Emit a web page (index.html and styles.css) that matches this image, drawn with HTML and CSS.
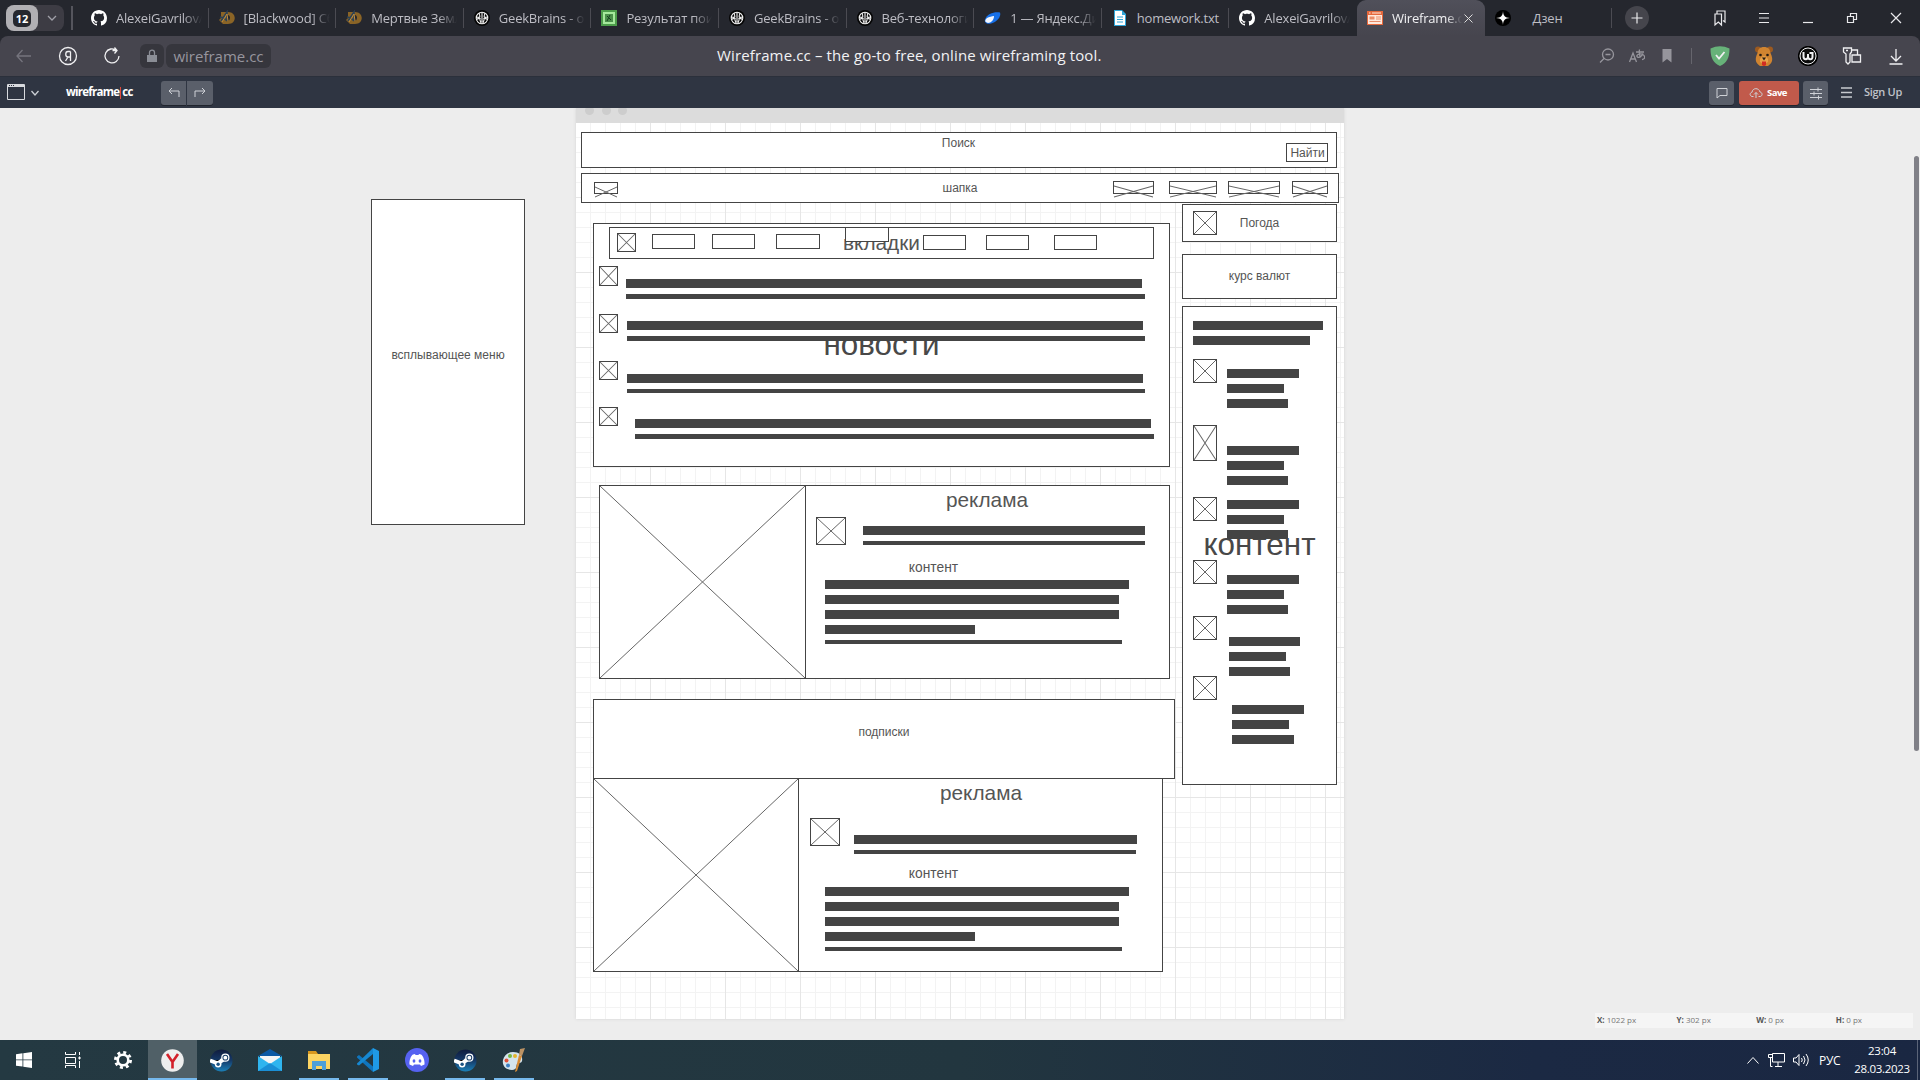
FILE: index.html
```html
<!DOCTYPE html>
<html lang="ru">
<head>
<meta charset="utf-8">
<title>Wireframe.cc – the go-to free, online wireframing tool.</title>
<link rel="stylesheet" href="styles.css">
</head>
<body>
<svg width="0" height="0" class="defs">
  <symbol id="github" viewBox="0 0 16 16"><path fill="#fff" d="M8 0C3.58 0 0 3.58 0 8c0 3.54 2.29 6.53 5.47 7.59.4.07.55-.17.55-.38 0-.19-.01-.82-.01-1.49-2.01.37-2.53-.49-2.69-.94-.09-.23-.48-.94-.82-1.13-.28-.15-.68-.52-.01-.53.63-.01 1.08.58 1.23.82.72 1.21 1.87.87 2.33.66.07-.52.28-.87.51-1.07-1.78-.2-3.64-.89-3.64-3.95 0-.87.31-1.59.82-2.15-.08-.2-.36-1.02.08-2.12 0 0 .67-.21 2.2.82.64-.18 1.32-.27 2-.27s1.36.09 2 .27c1.53-1.04 2.2-.82 2.2-.82.44 1.1.16 1.92.08 2.12.51.56.82 1.27.82 2.15 0 3.07-1.87 3.75-3.65 3.95.29.25.54.73.54 1.48 0 1.07-.01 1.93-.01 2.2 0 .21.15.46.55.38A8.01 8.01 0 0 0 16 8c0-4.42-3.58-8-8-8z"/></symbol>
  <symbol id="dsite" viewBox="0 0 16 16"><path fill="#8a6426" d="M2 2h7c9 0 9 12 0 12H4L0 10l2-2z"/><path fill="#25272e" d="M8 5c4-1 4 6 0 6z"/><path d="M2 11 8 2v9M1 7l4 1 3 3" fill="none" stroke="#2d4254" stroke-width="1.6"/><path d="m3 12 5-8 1 7" fill="none" stroke="#c08c3d"/></symbol>
  <symbol id="brain" viewBox="0 0 16 16"><circle cx="8" cy="8" r="8" fill="#050505"/><g fill="none" stroke="#eee" stroke-width="1.1"><circle cx="8" cy="8" r="5.800"/><path d="M8 2v12M6 3.500c-2 1 1 2.500-.5 3.500S2.500 6 2.500 8M6 12.500c2-1-1-2 0-3.500s-2-1-3 .5M10 3.500c2 1-1 2.500.5 3.500s3-1 3 1M10 12.500c-2-1 1-2 0-3.500s2-1 3 .5"/></g></symbol>
  <symbol id="steam" viewBox="0 0 24 24"><defs><linearGradient id="sg" x2="0" y2="1"><stop stop-color="#101b3d"/><stop offset=".5" stop-color="#153a68"/><stop offset="1" stop-color="#1b80b8"/></linearGradient></defs><circle cx="12" cy="12" r="11.500" fill="url(#sg)"/><path d="m0 12 8 3 6-4M8 16l5-5" stroke="#fff" stroke-width="4"/><circle cx="8.500" cy="16" r="3.400" fill="#fff"/><circle cx="8.500" cy="16" r="1.800" fill="#1b5384"/><circle cx="16" cy="9" r="4.300" fill="#fff"/><circle cx="16" cy="9" r="3" fill="#173b66"/><circle cx="16" cy="9" r="2" fill="#fff"/></symbol>
</svg>

<header class="tabstrip">
  <div class="group"><span class="count"><b>12</b></span><svg class="chev" width="10" height="6" viewBox="0 0 10 6"><path d="m1 1 4 4 4-4"/></svg></div>
  <i class="group-sep"></i>
  <nav class="tabs">
    <div class="tab"><svg width="16" height="16"><use href="#github"/></svg><span>AlexeiGavrilov/</span></div>
    <div class="tab"><svg width="16" height="16"><use href="#dsite"/></svg><span>[Blackwood] Сб</span></div>
    <div class="tab"><svg width="16" height="16"><use href="#dsite"/></svg><span>Мертвые Земл</span></div>
    <div class="tab"><svg width="16" height="16"><use href="#brain"/></svg><span>GeekBrains - об</span></div>
    <div class="tab"><svg width="16" height="16" viewBox="0 0 16 16"><path fill="#4d9d4b" d="M0 0h16v16H0z"/><path fill="#a5e89c" d="M2 2h12v12H2z"/><path fill="#4a8f4a" d="M4 4h8v8H4z"/><path d="m6 6 4 4m-1-5-3 6" stroke="#173f20"/></svg><span>Результат поис</span></div>
    <div class="tab"><svg width="16" height="16"><use href="#brain"/></svg><span>GeekBrains - об</span></div>
    <div class="tab"><svg width="16" height="16"><use href="#brain"/></svg><span>Веб-технологи</span></div>
    <div class="tab"><svg width="17" height="16" viewBox="0 0 17 16"><path fill="#1770e8" d="M16 2.500c1.500 5-4 9.500-9 11-4 1-7-1-6-4C3 4 10 1.500 16 2.500z"/><path fill="#f3f7ff" d="M10 6c0 4-3 7-6 7-4-1-3-3-1-5 2-1 5-2 7-2z"/></svg><span>1 — Яндекс.Ди</span></div>
    <div class="tab"><svg width="16" height="16" viewBox="0 0 16 16"><path fill="#2fa5d8" d="M2 0h8l4 4v12H2z"/><path fill="#fff" d="M3 1h7v4h3v10H3z"/><path d="M5 7h6M5 9.500h6M5 12h6" stroke="#2fa5d8"/></svg><span>homework.txt</span></div>
    <div class="tab"><svg width="16" height="16"><use href="#github"/></svg><span>AlexeiGavrilov/</span></div>
    <div class="tab active"><svg width="16" height="16" viewBox="0 0 16 16"><path fill="#e5683c" d="M0 1h16v14H0z"/><path fill="#ffe8dc" d="M1 5h14v9H1zM2 2.500h1.500v1H2zm3 0h9v1H5z"/><path fill="#e98c69" d="M2.500 6.500h5v3h-5zm6.500 0h5v1H9zm0 2h5v1H9zm-6.500 2.500h11v1h-11z"/></svg><span>Wireframe.cc</span><svg class="x" width="9" height="9" viewBox="0 0 9 9"><path d="m.5.500 8 8m0-8-8 8"/></svg></div>
    <div class="tab zen"><svg width="16" height="16" viewBox="0 0 16 16"><circle cx="8" cy="8" r="8" fill="#000"/><path fill="#fff" d="M8 1c.3 5 2 6.700 7 7-5 .3-6.700 2-7 7-.3-5-2-6.700-7-7 5-.3 6.700-2 7-7z"/></svg><span>Дзен</span></div>
  </nav>
  <button class="plus"><svg width="12" height="12" viewBox="0 0 12 12"><path d="M6 .5v11M.5 6h11"/></svg></button>
  <div class="win">
    <svg viewBox="0 0 20 20"><path d="M7 6V3h8v11l-2-1.500M5 6h6.500v11l-3.200-3L5 17z"/></svg>
    <svg viewBox="0 0 20 20"><path d="M5 5.500h10M5 10h10M5 14.500h10"/></svg>
    <svg viewBox="0 0 20 20"><path d="M5 14.500h10"/></svg>
    <svg viewBox="0 0 20 20"><path d="M5.500 8.500h6v6h-6zM8.500 8V5.500h6v6H12"/></svg>
    <svg viewBox="0 0 20 20"><path d="m5 5 10 10m0-10L5 15"/></svg>
  </div>
</header>

<div class="toolbar">
  <div class="navs">
    <svg class="dim" viewBox="0 0 20 20"><path d="M17 10H3m5.500-6L3 10l5.500 6"/></svg>
    <svg viewBox="0 0 20 20"><circle cx="10" cy="10" r="8.500"/><path d="M12.500 5.500v9.500m0-9.500h-2.500c-3 0-3 5.500 0 5.500h2.500M10 11l-2.500 4"/></svg>
    <svg viewBox="0 0 20 20"><path d="M14.500 4.500A7 7 0 1 0 17 10M10.500 4.500h4.500m-2.500-3 2.500 3-2.500 3"/></svg>
  </div>
  <div class="lock"><svg width="12" height="14" viewBox="0 0 12 14"><path d="M1 6h10v7H1z" fill="#8b8e96"/><path class="shackle" d="M3.500 6V3.500c0-3.300 5-3.300 5 0V6"/></svg></div>
  <div class="url">wireframe.cc</div>
  <h1>Wireframe.cc – the go-to free, online wireframing tool.</h1>
  <div class="small">
    <svg viewBox="0 0 16 16"><circle cx="9" cy="6.500" r="5.500"/><path d="m5 10.500-4 4M6.500 6.500h5"/></svg>
    <svg viewBox="0 0 16 16"><path d="M.5 14 4 5l3.500 9M2 11h4M7 4h8M10.500 1.500c-.5 3 0 6 1 8M14 5.500c-1 3-5 5-6 3s5-4 7-1-1 4-2 4"/></svg>
    <svg viewBox="0 0 16 16"><path class="fill" d="M3.500 1h9v13.500L8 11l-4.500 3.500z"/></svg>
  </div>
  <i class="tsep"></i>
  <div class="ext">
    <svg viewBox="0 0 20 20"><path fill="#67b279" stroke="none" d="M.5 2.500Q10-2 19.500 2.500C19.500 12 17 16.500 10 20 3 16.500.5 12 .5 2.500z"/><path stroke-width="1.800" d="m6 9 3 3.500L14.500 6"/></svg>
    <svg viewBox="0 0 20 20"><g stroke="none"><circle cx="4" cy="3.500" r="3" fill="#9c5a20"/><circle cx="16" cy="3.500" r="3" fill="#9c5a20"/><path fill="#d08430" d="M10 1c4 0 6 2 6.500 6 3 6 2 10-2.500 13H6c-4.500-3-5.500-7-2.500-13C4 3 6 1 10 1z"/><path fill="#e8a24a" d="M6 13q4-6 8 0v3q-4 3-8 0z"/><circle cx="6.500" cy="9" r="1.300" fill="#251b13"/><circle cx="13.500" cy="9" r="1.300" fill="#251b13"/><path fill="#251b13" d="M8 11.500h4l-2 3z"/><path fill="#d32c22" d="M8 15.500h4V19q-2 2-4 0z"/></g></svg>
    <svg viewBox="0 0 20 20"><circle cx="10" cy="10" r="9.500" fill="#0b0b0b" stroke="#000"/><circle cx="10" cy="10" r="8" stroke-width="1"/><path stroke-width="2" d="M5.500 6v4.500q0 2.700 2.200 2.700T10 10.500V8v2.500q0 2.700 2.300 2.700t2.200-2.700V7h-3"/></svg>
    <svg viewBox="0 0 20 20"><path d="M1.500 2h8v4L8 8v8l-2 2-2-2V8L1.500 6zM10 4h5.500v5M10 9h8.500v7H10zM4 4.500h2"/></svg>
    <svg viewBox="0 0 20 20"><path d="M10 3v12m-5-5 5 5 5-5M3.500 18h13"/></svg>
  </div>
</div>

<div class="appbar">
  <svg class="frame" width="18" height="16" viewBox="0 0 18 16"><path d="M.5.500h17v15H.5z" fill="none" stroke="#d8dade"/><path fill="#d8dade" d="M1 1h16v2H1z"/><path stroke="#2f3542" d="M2 1.500h1m1 0h1m1 0h1"/></svg>
  <svg class="chev" width="8" height="6" viewBox="0 0 8 6"><path d="m.5 1 3.500 4L7.500 1"/></svg>
  <div class="logo">wireframe<i></i>cc</div>
  <div class="pair">
    <button><svg viewBox="0 0 14 14"><path d="M5 2 2 5l3 3M2 5h10v6"/></svg></button><button><svg viewBox="0 0 14 14"><path d="m9 2 3 3-3 3M12 5H2v6"/></svg></button>
  </div>
  <div class="actions">
    <button><svg viewBox="0 0 14 14"><path d="M2 2.500h10v7H5l-3 2.500z"/></svg></button>
    <button class="save"><svg viewBox="0 0 14 14"><path d="M4.500 10.500H3c-3-1-2-4 0-4.200C3.500 1.500 10 1.500 11 6c3 .5 2.500 4.500 0 4.500H9.500M7 12V6.500m-2 2 2-2 2 2"/></svg>Save</button>
    <button><svg viewBox="0 0 14 14"><path d="M1 3.500h12M1 7.500h12M1 11.500h12M9 1.500v4M5 5.500v4M9.500 9.500v4"/></svg></button>
    <svg class="ham" width="11" height="11" viewBox="0 0 11 11"><path d="M0 1h11M0 5.500h11M0 10h11"/></svg>
    <span class="signup">Sign Up</span>
  </div>
</div>

<main class="workspace">
  <section class="sheet"><div class="sheet-bar"><i></i><i></i><i></i></div><div class="grid"></div></section>
  <div id="drawing"></div>
  <div class="coords"><span><b>X:</b> 1022 px</span><span><b>Y:</b> 302 px</span><span><b>W:</b> 0 px</span><span><b>H:</b> 0 px</span></div>
  <i class="scroll"></i>
</main>

<footer class="taskbar">
  <div class="apps">
    <span><svg width="16" height="16" viewBox="0 0 16 16"><path fill="#fff" d="M0 2.200 6.500 1.300v6.200H0zM7.300 1.200 16 0v7.500H7.300zM0 8.300h6.500v6.200L0 13.700zM7.300 8.300H16V16l-8.700-1.200z"/></svg></span>
    <span><svg width="16" height="16" viewBox="0 0 16 16" fill="none" stroke="#fff"><path d="M.5 0v2.500h10V0M.5 5.500h10v6H.5zM.5 16v-2.500h10V16M14.500 0v3m0 6v7"/><path fill="#fff" d="M14 5h1v2h-1z"/></svg></span>
    <span><svg width="18" height="18" viewBox="0 0 18 18"><circle cx="9" cy="9" r="5.300" fill="none" stroke="#fff" stroke-width="2.600"/><circle cx="9" cy="9" r="7.600" fill="none" stroke="#fff" stroke-width="2.800" stroke-dasharray="3 2.970"/></svg></span>
    <span class="cur"><svg width="23" height="23" viewBox="0 0 23 23"><circle cx="11.500" cy="11.500" r="11.300" fill="#eee"/><path d="m6 5 5.500 8L17 5m-5.500 8v6.500" fill="none" stroke="#d3202a" stroke-width="2.600"/></svg></span>
    <span><svg width="23" height="23"><use href="#steam"/></svg></span>
    <span><svg width="24" height="22" viewBox="0 0 24 22"><path fill="#0c59a4" d="M12 0 24 7H0z"/><path fill="#f5f5f5" d="M2 7h20v9H2z"/><path fill="#2fb5ef" d="M0 7l12 8 12-8v15H0z"/><path fill="#1a8fd6" d="m0 22 12-8 12 8z"/></svg></span>
    <span class="run"><svg width="22" height="19" viewBox="0 0 22 19"><path fill="#d8981f" d="M0 0h8l2 3H0z"/><path fill="#fcd462" d="M0 3h22v15H0z"/><path fill="#4d9fd9" d="M4 10h14v9h-4v-4H8v4H4z"/></svg></span>
    <span class="run"><svg width="24" height="24" viewBox="0 0 24 24"><path fill="#1075bd" d="M1 8.500 3 7l14 11.500V24L1 9.500z"/><path fill="#1688d2" d="M1 15.500 17 0v6L3 17.500l-2-1z"/><path fill="#1f9ae6" d="m17 0 6 3v18l-6 3z"/></svg></span>
    <span><svg width="24" height="24" viewBox="0 0 24 24"><circle cx="12" cy="12" r="12" fill="#5662f0"/><path fill="#fff" d="M8 6.500 10 6l.5 1h3L14 6l2 .5c2 1 4 6 3.500 10L16 18l-1-1.500H9L8 18l-3.500-1.500C4 12.500 6 7.500 8 6.500z"/><ellipse cx="9" cy="13" rx="1.400" ry="1.700" fill="#5662f0"/><ellipse cx="15" cy="13" rx="1.400" ry="1.700" fill="#5662f0"/></svg></span>
    <span class="run"><svg width="23" height="23"><use href="#steam"/></svg></span>
    <span class="run"><svg width="24" height="24" viewBox="0 0 24 24"><path fill="#d5e4ec" d="M11 4c7 0 10 4 9 9-1 3-4 1-5 3s0 6-5 6C3 22 0 17 1 12s5-8 10-8z"/><circle cx="8" cy="8" r="2" fill="#76b843"/><circle cx="4.500" cy="12.500" r="2" fill="#e25036"/><circle cx="13" cy="8" r="2" fill="#e5b52c"/><circle cx="6" cy="17.500" r="2" fill="#3c7fc2"/><path fill="#d88b34" d="m17 7 3 1-5 15-2 1z"/><path fill="#bd9364" d="m18 1 5-1-3 8-3-1z"/></svg></span>
  </div>
  <div class="tray">
    <svg width="12" height="7" viewBox="0 0 12 7"><path d="m.5 6.500 5.500-6 5.500 6"/></svg>
    <svg width="17" height="14" viewBox="0 0 17 14"><path d="M4.500.500h12v8.500h-12zM10 9v4M7 13.500h7M.5 1.500h4v3h-4zM2.500 5v8.500h2"/></svg>
    <svg width="17" height="14" viewBox="0 0 17 14"><path d="M.5 5h2.500l3-3.500v11L3 9H.5zM8.500 5q1.500 2 0 4M10.500 3q3 4 0 8M13 1q4.500 6 0 12"/></svg>
    <span class="lang">РУС</span>
    <div class="clock"><span>23:04</span><span>28.03.2023</span></div>
    <i></i>
  </div>
</footer>
<script src="drawing.js"></script>
</body>
</html>
```
FILE: drawing.js
```js
// Objects of the free canvas, back to front, in window coordinates.
const TOP = 108;
const host = document.getElementById('drawing');

function place(cls, x, y, w, h) {
  const el = document.createElement('div');
  el.className = cls;
  el.style.cssText = `left:${x}px;top:${y - TOP}px;width:${w}px;height:${h}px`;
  host.append(el);
  return el;
}
const box = (x, y, w, h) => place('box', x, y, w, h);
const bar = (x, y, w, h = 9) => place('bar', x, y, w, h);
function label(text, cx, cy, size) {
  const el = place('label s' + size, cx - 100, cy - 20, 200, 40);
  el.textContent = text;
}
function picture(x, y, w, h, shifted) {
  const el = place(shifted ? 'box picture shifted' : 'box picture', x, y, w, h);
  el.innerHTML = '<svg viewBox="0 0 10 10" preserveAspectRatio="none"><path d="M0 0 10 10M10 0 0 10"/></svg>';
}

// pop-up menu
box(371, 199, 154, 326);
label('всплывающее меню', 448, 355, 12);

// search and header
box(581, 132, 756, 36);
label('Поиск', 958.5, 143, 12);
box(1286, 143, 42, 19);
label('Найти', 1307.5, 153, 12);
box(581, 173, 758, 30);
label('шапка', 960, 188, 12);
picture(594, 182, 24, 12, true);
picture(1113, 181, 41, 13, true);
picture(1169, 181, 48, 13, true);
picture(1228, 181, 52, 13, true);
picture(1292, 181, 36, 13, true);

// weather and currency
box(1182, 204, 155, 38);
picture(1193, 211, 24, 24);
label('Погода', 1259.5, 223, 12);
box(1182, 254, 155, 45);
label('курс валют', 1259.5, 276, 12);

// news
box(593, 223, 577, 244);
label('новости', 881.5, 344.5, 31);
box(609, 227, 545, 32);
label('вкладки', 881.5, 243, 21);
picture(617, 233, 19, 19);
box(652, 234, 43, 15);
box(712, 234, 43, 15);
box(776, 234, 44, 15);
box(845, 227, 44, 15);
box(923, 235, 43, 15);
box(986, 235, 43, 15);
box(1054, 235, 43, 15);
picture(599, 266, 19, 20);
picture(599, 314, 19, 19);
picture(599, 361, 19, 19);
picture(599, 407, 19, 19);
bar(626, 279, 516); bar(626, 294, 519, 5);
bar(627, 321, 516); bar(627, 336, 518, 5);
bar(627, 374, 516); bar(627, 389, 518, 4);
bar(635, 419, 516); bar(635, 434, 519, 5);

// side content
box(1182, 306, 155, 479);
label('контент', 1259.5, 545, 31);
bar(1193, 321, 130); bar(1193, 336, 117);
picture(1193, 359, 24, 24);
picture(1193, 425, 24, 36);
[497, 560, 616, 676].forEach(y => picture(1193, y, 24, 24));
[[1227, 369, 72, 61], [1227, 446, 72, 61], [1227, 500, 72, 61],
 [1227, 575, 72, 61], [1229, 637, 71, 61], [1232, 705, 72, 62]].forEach(([x, y, a, c]) => {
  bar(x, y, a); bar(x, y + 15, 57); bar(x, y + 30, c);
});

function paragraph(y) {
  bar(825, y, 304); bar(825, y + 15, 294); bar(825, y + 30, 294);
  bar(825, y + 45, 150); bar(825, y + 60, 297, 4);
}

// first advert
box(599, 485, 571, 194);
picture(599, 485, 207, 194);
label('реклама', 987, 500, 21);
picture(816, 517, 30, 28);
bar(863, 526, 282); bar(863, 541, 282, 4);
label('контент', 933.5, 567, 14);
paragraph(580);

// second advert
box(593, 778, 570, 194);
picture(593, 778, 206, 194);
label('реклама', 981, 793, 21);
picture(810, 818, 30, 28);
bar(854, 835, 283); bar(854, 850, 282, 4);
label('контент', 933.5, 873, 14);
paragraph(887);

// subscriptions
box(593, 699, 582, 80);
label('подписки', 884, 732, 12);
```
FILE: styles.css
```css
* { box-sizing: border-box; }
body { margin: 0; width: 1920px; height: 1080px; overflow: hidden; display: flex; flex-direction: column; font-family: "Open Sans", "Noto Sans", sans-serif; background: #25272e; }
.defs { position: absolute; }
svg { display: block; flex: none; }
button { border: 0; padding: 0; margin: 0; font: inherit; display: flex; align-items: center; justify-content: center; }

/* tab strip */
.tabstrip { height: 36px; flex: none; background: #25272e; display: flex; align-items: flex-start; padding-left: 6px; }
.group { margin-top: 5px; width: 58px; height: 26px; border-radius: 8px; background: #3d3c44; display: flex; align-items: center; }
.count { width: 32px; height: 26px; border-radius: 8px; background: #b1b0b4; display: flex; align-items: center; justify-content: center; }
.count b { width: 18px; height: 17px; border-radius: 5px; background: #25272e; color: #fff; font-size: 11px; line-height: 17px; text-align: center; }
.chev { fill: none; stroke: #a0a0a8; stroke-width: 1.3; }
.group .chev { margin-left: 9px; }
.group-sep { width: 2px; height: 24px; background: #55555d; margin: 6px 8px 0 7px; }
.tabs { display: grid; grid-template-columns: repeat(12, 127.6px); width: 1531px; height: 36px; }
.tab { display: flex; align-items: center; padding-left: 10px; height: 36px; color: #bdbdc4; font-size: 13px; background: linear-gradient(#4b4b52, #4b4b52) right 8px / 1px 20px no-repeat; }
.tab span { margin-left: 9px; width: 86px; overflow: hidden; white-space: nowrap; letter-spacing: -0.2px; mask-image: linear-gradient(90deg, #000 78%, transparent 100%); }
.tab:nth-child(9) span { mask-image: none; }
.tab:nth-child(10) { background: none; }
.tab.active { background: linear-gradient(#50505a, #46454e); border-radius: 9px 9px 0 0; color: #f0f0f2; }
.active span { width: 70px; }
.x { margin-left: 2px; fill: none; stroke: #ddd; }
.tab.zen span { text-align: center; width: 56px; mask-image: none; }
.plus { width: 24px; height: 24px; margin: 6px 0 0 13px; border-radius: 50%; background: #45454c; }
.plus svg, .win svg { fill: none; stroke: #e9e9ec; stroke-width: 1.2; }
.win { margin: 8px 14px 0 auto; display: flex; gap: 24px; }
.win svg { width: 20px; height: 20px; }

/* address bar */
.toolbar { height: 40px; flex: none; background: #46454e; border-radius: 8px 8px 0 0; display: flex; align-items: center; padding: 0 14px; }
.toolbar svg { fill: none; stroke: #f0f0f2; stroke-width: 1.3; }
.navs { display: flex; gap: 24px; }
.navs svg, .ext svg { width: 20px; height: 20px; }
.navs .dim { stroke: #75747d; }
.lock, .url { height: 24px; border-radius: 6px; background: #36363d; display: flex; align-items: center; justify-content: center; }
.lock { width: 24px; margin-left: 18px; }
.lock svg { stroke: none; }
.lock .shackle { stroke: #8b8e96; }
.url { width: 105px; margin-left: 2px; color: #96959d; font-size: 15px; padding-bottom: 1px; }
.toolbar h1 { margin: -2px 0 0 446px; width: 384px; white-space: nowrap; font-size: 15px; letter-spacing: 0.13px; font-weight: 400; color: #f2f2f4; }
.small { margin-left: auto; display: flex; gap: 14px; }
.small svg { width: 16px; height: 16px; stroke: #96959c; }
.small .fill { fill: #96959c; stroke: none; }
.tsep { width: 1px; height: 16px; margin: 0 18px 0 16px; background: #66656d; }
.ext { display: flex; gap: 24px; }

/* application bar */
.appbar { height: 32px; flex: none; background: #2f3542; border-top: 1px solid #2b303b; display: flex; align-items: center; padding-left: 7px; position: relative; z-index: 2; }
.appbar .chev { margin-left: 6px; stroke: #ccd0d5; }
.appbar .frame { margin-top: -1px; }
.logo { margin: -2px 0 0 27px; width: 66px; color: #fff; font-weight: 700; font-size: 11.5px; letter-spacing: -0.75px; white-space: nowrap; display: flex; align-items: center; }
.logo i { flex: none; width: 1px; height: 12px; background: #e0493d; margin: 2px 1px 0 1px; }
.pair { display: flex; gap: 1px; margin-left: 29px; }
.pair button, .actions button { width: 25px; height: 24px; background: #5a5f6a; border-radius: 3px; box-shadow: 0 1px 0 #20242d; }
.pair button:first-child { border-radius: 3px 0 0 3px; }
.pair button:last-child { width: 26px; border-radius: 0 3px 3px 0; }
.appbar button svg { width: 14px; height: 14px; fill: none; stroke: #cfd2d7; }
.actions { margin-left: auto; display: flex; align-items: center; gap: 4px; }
.actions .save { width: 60px; margin: 0 0 0 1px; padding-right: 2px; background: #c15a4b; color: #fff; font-weight: 700; font-size: 9.5px; letter-spacing: -0.5px; gap: 4px; }
.ham { margin-left: 9px; stroke: #c7cacf; stroke-width: 1.5; }
.signup { margin: -2px 17px 0 8px; font-size: 11px; font-weight: 600; letter-spacing: -0.3px; color: #c0c3c9; white-space: nowrap; width: 39px; }

/* canvas */
.workspace { flex: 1; position: relative; background: #ededed; }
.sheet { width: 768px; height: 911px; margin-left: 576px; background: #fff; box-shadow: 0 0 3px #d2d2d2; display: flex; flex-direction: column; }
.sheet-bar { height: 15px; background: #dcdcdc; display: flex; gap: 7.5px; padding-left: 9px; overflow: hidden; }
.sheet-bar i { width: 9px; height: 9px; margin-top: -2px; border-radius: 50%; background: #cdcdcd; }
.grid { flex: 1; background:
  linear-gradient(90deg, #e6e6e6 1px, transparent 1px) -1px 0 / 75px 100%,
  linear-gradient(#e6e6e6 1px, transparent 1px) 0 -1px / 100% 75px,
  linear-gradient(90deg, #f3f3f3 1px, transparent 1px) -1px 0 / 15px 100%,
  linear-gradient(#f3f3f3 1px, transparent 1px) 0 -1px / 100% 15px; }
#drawing > div { position: absolute; }
.box { background: #fff; border: 1px solid #444; }
.bar { background: #444; }
.label { display: flex; align-items: center; justify-content: center; white-space: nowrap; color: #555; font-family: "Liberation Sans", Arial, sans-serif; }
.s12 { font-size: 12px; }
.s14 { font-size: 13.8px; }
.s21 { font-size: 20.8px; }
.s31 { font-size: 31.4px; color: #484848; }
.picture svg { width: 100%; height: 100%; overflow: visible; fill: none; stroke: #666; stroke-width: 1; }
.picture path { vector-effect: non-scaling-stroke; }
.shifted svg { margin-top: 4px; }
.coords { position: absolute; left: 1595px; bottom: 12px; width: 318px; height: 15px; background: #f5f5f5; display: flex; align-items: center; padding: 0 0 2px 2px; font-size: 8px; color: #777; }
.coords span { flex: none; width: 79.6px; }
.coords b { color: #555; }
.scroll { position: absolute; right: 1px; top: 48px; width: 5px; height: 595px; background: #808087; border-radius: 3px; }

/* taskbar */
.taskbar { height: 40px; flex: none; background: linear-gradient(90deg, #243942, #22363f 50%, #1b2943 80%, #1a2742); display: flex; justify-content: space-between; }
.apps { display: flex; padding-left: 1px; }
.apps span { width: 48.9px; height: 40px; display: flex; align-items: center; justify-content: center; }
.apps span:nth-child(-n+2) { padding-right: 3px; }
.apps .cur { background: #506067; border-bottom: 2px solid #76b9ed; padding-top: 2px; }
.apps .run { background: linear-gradient(#76b9ed, #76b9ed) center bottom / 40px 2px no-repeat; }
.tray { display: flex; align-items: center; color: #fff; font-size: 12px; width: 173px; letter-spacing: -0.3px; }
.tray svg { fill: none; stroke: #fff; margin-right: 9px; }
.tray svg + svg { margin-right: 8px; }
.lang { width: 26px; margin-left: 1px; }
.clock { width: 72px; display: flex; flex-direction: column; align-items: center; line-height: 18px; font-size: 11.5px; padding-left: 2px; }
.tray i { width: 1px; height: 40px; background: #5b6478; }
```
